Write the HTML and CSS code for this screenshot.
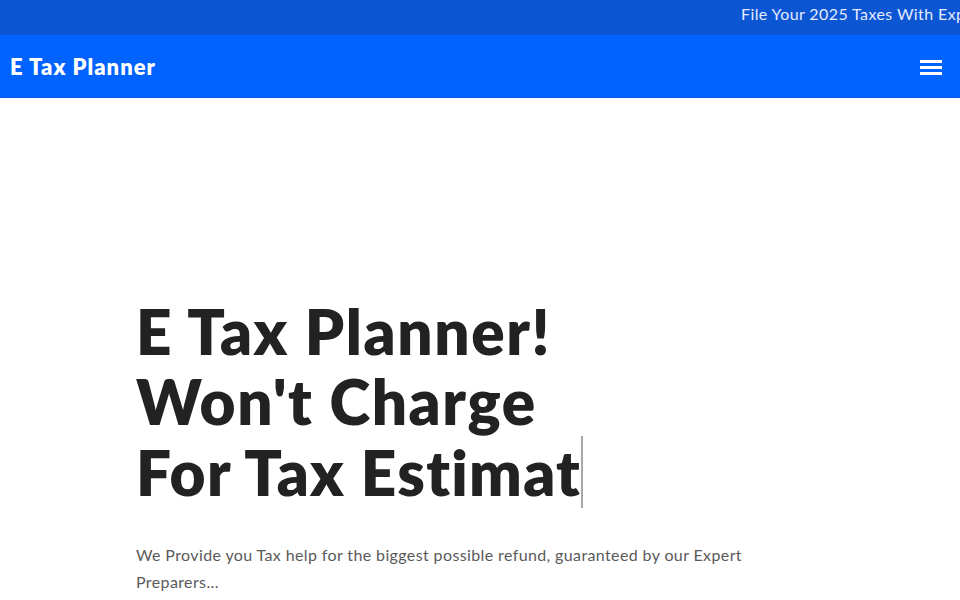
FILE: index.html
```html
<!DOCTYPE html>
<html lang="en">
<head>
<meta charset="utf-8">
<title>E Tax Planner</title>
<link rel="stylesheet" href="styles.css">
</head>
<body>
<div class="topbar">
  <div class="marquee">File Your 2025 Taxes With Expert Preparers And Get Your Maximum Refund</div>
</div>
<header class="nav">
  <a class="brand" href="#">E Tax Planner</a>
  <button class="burger" aria-label="Menu"><span></span><span></span><span></span></button>
</header>
<main class="hero">
  <div class="hero-inner">
    <h1 class="title">E Tax Planner!<br>Won't Charge<br><span class="typed">For Tax Estimat</span></h1>
    <p class="lead">We Provide you Tax help for the biggest possible refund, guaranteed by our Expert Preparers...</p>
  </div>
</main>
</body>
</html>
```
FILE: styles.css
```css
* { box-sizing: border-box; }
html, body { margin: 0; padding: 0; }
body {
  font-family: "Lato", "Noto Sans", sans-serif;
  background: #ffffff;
  color: #222222;
  width: 960px;
  height: 600px;
  overflow: hidden;
}
.topbar {
  height: 35px;
  background: #0c56d4;
  overflow: hidden;
  display: flex;
  align-items: flex-start;
  padding-top: 4px;
}
.marquee {
  white-space: nowrap;
  padding-left: 741px;
  color: #e3ebff;
  font-size: 16px;
  line-height: 20px;
  letter-spacing: 0.4px;
}
.nav {
  height: 63px;
  background: #0062ff;
  display: flex;
  align-items: center;
  justify-content: space-between;
  padding: 0 18px 0 10px;
  border-bottom: 1px solid #0a58e0;
}
.brand {
  color: #ffffff;
  text-decoration: none;
  font-weight: 800;
  font-size: 22px;
  letter-spacing: 1px;
}
.burger {
  background: none;
  border: 0;
  padding: 0;
  width: 22px;
  display: flex;
  flex-direction: column;
  gap: 3px;
  margin-top: 2px;
}
.burger span {
  display: block;
  height: 3px;
  width: 22px;
  background: #ffffff;
}
.hero {
  padding: 198px 0 0 136px;
}
.title {
  margin: 0;
  font-size: 62px;
  line-height: 70px;
  font-weight: 800;
  color: #222222;
  letter-spacing: 1.6px;
}
.typed {
  display: inline-block;
  border-right: 2px solid #a8a8a8;
  line-height: 72px;
  vertical-align: top;
  margin-right: -2px;
  letter-spacing: 1.3px;
}
.lead {
  margin: 33px 0 0;
  width: 630px;
  font-size: 16px;
  line-height: 27px;
  letter-spacing: 0.38px;
  color: #5a5a5a;
}
```
